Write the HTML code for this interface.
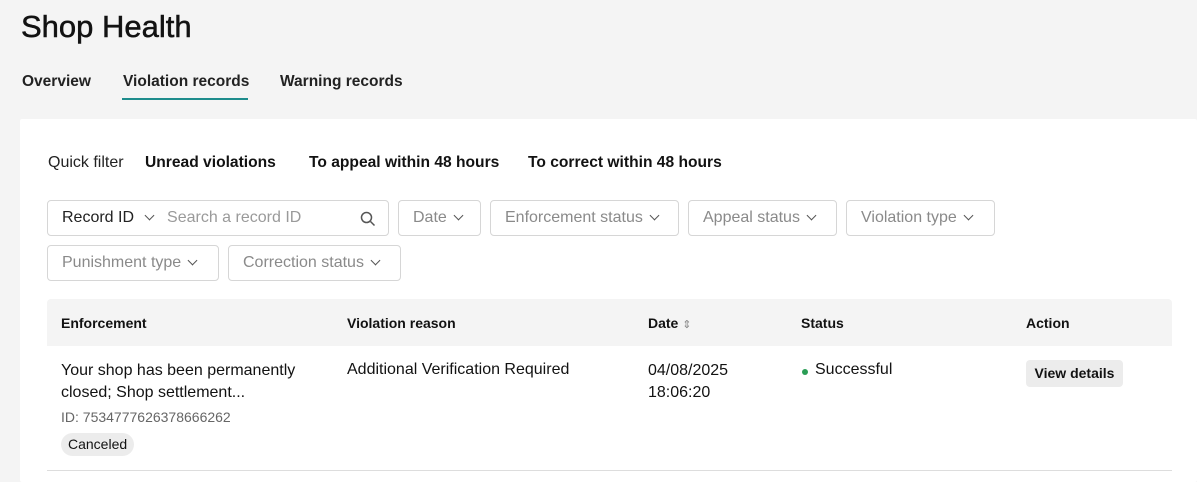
<!DOCTYPE html>
<html><head><style>
*{box-sizing:border-box;margin:0;padding:0}
body{width:1197px;height:482px;background:#f4f4f4;font-family:"Liberation Sans",sans-serif;color:#121212;position:relative;overflow:hidden}
.a{position:absolute;white-space:nowrap}
.panel{position:absolute;left:20px;top:119px;width:1177px;height:363px;background:#fff;border-radius:2px}
.box{position:absolute;height:36px;border:1px solid #d6d6d6;border-radius:4px;background:#fff;font-size:16px;color:#8a8a8a;line-height:34px;padding-left:14px}
.chev{display:inline-block;width:7px;height:7px;border-right:1.5px solid #555;border-bottom:1.5px solid #555;transform:rotate(45deg);margin-left:8px;position:relative;top:-3px}
.th{font-size:14px;font-weight:bold;top:315px}
</style></head><body>
<div class="a" style="left:21px;top:9px;font-size:31px;-webkit-text-stroke:0.5px #121212">Shop Health</div>
<div class="a" style="left:22px;top:73px;font-size:15.5px;font-weight:bold;color:#222">Overview</div>
<div class="a" style="left:123px;top:73px;font-size:15.5px;font-weight:bold;color:#222">Violation records</div>
<div class="a" style="left:122px;top:98px;width:126px;height:2px;background:#1e8c8c"></div>
<div class="a" style="left:280px;top:73px;font-size:15.5px;font-weight:bold;color:#222">Warning records</div>
<div class="panel"></div>
<div class="a" style="left:48px;top:154px;font-size:16px;color:#222">Quick filter</div>
<div class="a" style="left:145px;top:154px;font-size:15.6px;font-weight:bold">Unread violations</div>
<div class="a" style="left:309px;top:154px;font-size:15.6px;font-weight:bold">To appeal within 48 hours</div>
<div class="a" style="left:528px;top:154px;font-size:15.6px;font-weight:bold">To correct within 48 hours</div>
<div class="box" style="left:47px;top:200px;width:342px;color:#222">Record ID<span class="chev" style="margin-left:12px"></span><span style="color:#9a9a9a;margin-left:14px">Search a record ID</span>
<svg style="position:absolute;left:312px;top:10px" width="16" height="16" viewBox="0 0 16 16"><circle cx="6.5" cy="6.5" r="5" fill="none" stroke="#555" stroke-width="1.5"/><path d="M10.5 10.5L14.5 14.5" stroke="#555" stroke-width="1.5"/></svg></div>
<div class="box" style="left:398px;top:200px;width:83px">Date<span class="chev"></span></div>
<div class="box" style="left:490px;top:200px;width:189px">Enforcement status<span class="chev"></span></div>
<div class="box" style="left:688px;top:200px;width:149px">Appeal status<span class="chev"></span></div>
<div class="box" style="left:846px;top:200px;width:149px">Violation type<span class="chev"></span></div>
<div class="box" style="left:47px;top:245px;width:172px">Punishment type<span class="chev"></span></div>
<div class="box" style="left:228px;top:245px;width:173px">Correction status<span class="chev"></span></div>
<div class="a" style="left:47px;top:299px;width:1125px;height:47px;background:#f4f4f4;border-radius:4px 4px 0 0"></div>
<div class="a th" style="left:61px">Enforcement</div>
<div class="a th" style="left:347px">Violation reason</div>
<div class="a th" style="left:648px">Date <span style="font-weight:normal;color:#888;font-size:11px">&#8661;</span></div>
<div class="a th" style="left:801px">Status</div>
<div class="a th" style="left:1026px">Action</div>
<div class="a" style="left:61px;top:360px;font-size:16px;line-height:22px">Your shop has been permanently<br>closed; Shop settlement...</div>
<div class="a" style="left:61px;top:409px;font-size:14px;color:#666">ID: 7534777626378666262</div>
<div class="a" style="left:61px;top:433px;height:23px;padding:0 7px;background:#ececec;border-radius:12px;font-size:14px;line-height:23px">Canceled</div>
<div class="a" style="left:347px;top:361px;font-size:16px">Additional Verification Required</div>
<div class="a" style="left:648px;top:360px;font-size:16px;line-height:22px">04/08/2025<br>18:06:20</div>
<div class="a" style="left:802px;top:369px;width:6px;height:6px;border-radius:50%;background:#2a9d55"></div>
<div class="a" style="left:815px;top:361px;font-size:16px">Successful</div>
<div class="a" style="left:1026px;top:360px;height:27px;width:97px;background:#ececec;border-radius:4px;font-size:14px;font-weight:bold;line-height:27px;text-align:center">View details</div>
<div class="a" style="left:47px;top:470px;width:1125px;height:1px;background:#ddd"></div>
</body></html>
